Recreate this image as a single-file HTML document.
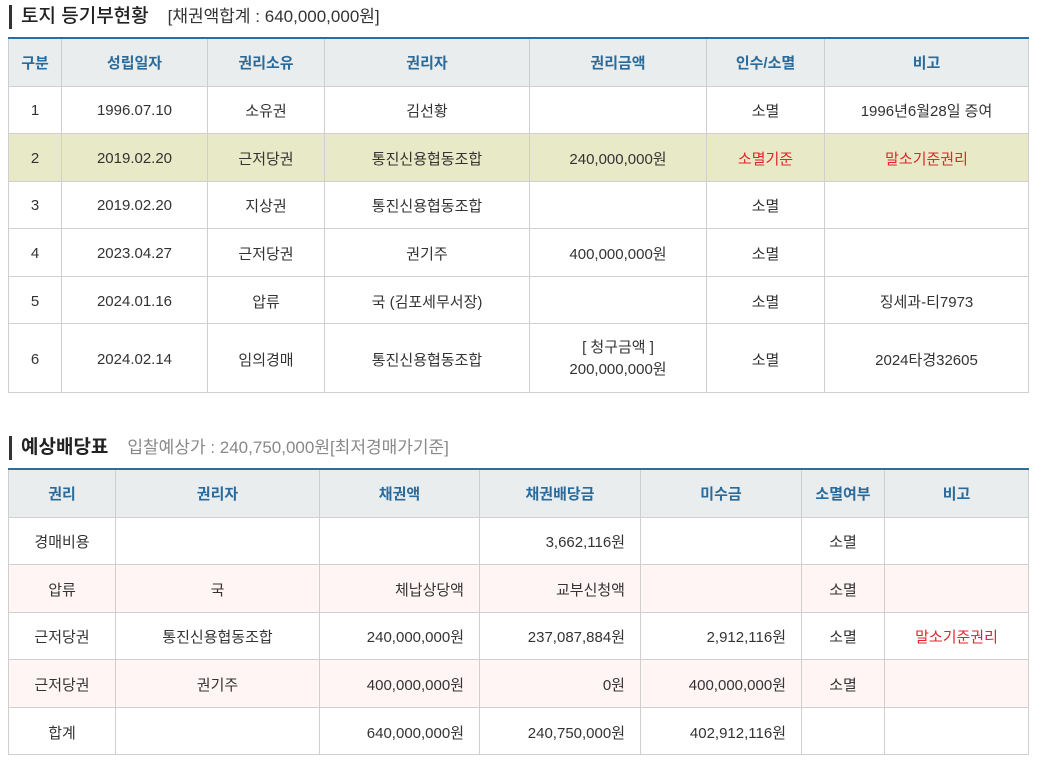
<!DOCTYPE html>
<html><head><meta charset="utf-8"><style>
*{margin:0;padding:0;box-sizing:border-box}
body{width:1039px;height:766px;background:#fff;font-family:"Liberation Sans","Noto Sans CJK KR",sans-serif;color:#333;position:relative;overflow:hidden}
.t{position:absolute;left:9px;border-left:3px solid #333;padding-left:9px;line-height:24px;height:24px;white-space:nowrap}
.t b{font-size:19px;font-weight:500;color:#222}
.t b.s{font-weight:700}
.t span{font-size:17px;margin-left:19px}
table{position:absolute;left:8px;width:1020px;border-collapse:collapse;table-layout:fixed;font-size:15px;border-top:2px solid #2c6e9c}
td,th{border:1px solid #cfcfcf;text-align:center;padding:0}
th{background:#eaeded;color:#2a6b9c;font-weight:700;height:48px}
td{height:47.6px;padding-top:2px}
.r{text-align:right;padding-right:15px}
.red{color:#e0252b}
.g td{background:#e8e9c6}
.p td{background:#fff5f5}
</style></head><body>
<div class="t" style="top:5px"><b>토지 등기부현황</b><span style="color:#333">[채권액합계 : 640,000,000원]</span></div>
<table style="top:37px">
<colgroup><col style="width:53px"><col style="width:146px"><col style="width:117px"><col style="width:205px"><col style="width:177px"><col style="width:118px"><col style="width:204px"></colgroup>
<tr><th>구분</th><th>성립일자</th><th>권리소유</th><th>권리자</th><th>권리금액</th><th>인수/소멸</th><th>비고</th></tr>
<tr><td>1</td><td>1996.07.10</td><td>소유권</td><td>김선황</td><td></td><td>소멸</td><td>1996년6월28일 증여</td></tr>
<tr class="g"><td>2</td><td>2019.02.20</td><td>근저당권</td><td>통진신용협동조합</td><td>240,000,000원</td><td class="red">소멸기준</td><td class="red">말소기준권리</td></tr>
<tr><td>3</td><td>2019.02.20</td><td>지상권</td><td>통진신용협동조합</td><td></td><td>소멸</td><td></td></tr>
<tr><td>4</td><td>2023.04.27</td><td>근저당권</td><td>권기주</td><td>400,000,000원</td><td>소멸</td><td></td></tr>
<tr><td>5</td><td>2024.01.16</td><td>압류</td><td>국 (김포세무서장)</td><td></td><td>소멸</td><td>징세과-티7973</td></tr>
<tr><td style="height:69px">6</td><td>2024.02.14</td><td>임의경매</td><td>통진신용협동조합</td><td style="line-height:22px">[ 청구금액 ]<br>200,000,000원</td><td>소멸</td><td>2024타경32605</td></tr>
</table>
<div class="t" style="top:436px"><b class="s">예상배당표</b><span style="color:#888">입찰예상가 : 240,750,000원[최저경매가기준]</span></div>
<table style="top:468px">
<colgroup><col style="width:107px"><col style="width:204px"><col style="width:160px"><col style="width:161px"><col style="width:161px"><col style="width:83px"><col style="width:144px"></colgroup>
<tr><th>권리</th><th>권리자</th><th>채권액</th><th>채권배당금</th><th>미수금</th><th>소멸여부</th><th>비고</th></tr>
<tr><td>경매비용</td><td></td><td></td><td class="r">3,662,116원</td><td></td><td>소멸</td><td></td></tr>
<tr class="p"><td>압류</td><td>국</td><td class="r">체납상당액</td><td class="r">교부신청액</td><td></td><td>소멸</td><td></td></tr>
<tr><td>근저당권</td><td>통진신용협동조합</td><td class="r">240,000,000원</td><td class="r">237,087,884원</td><td class="r">2,912,116원</td><td>소멸</td><td class="red">말소기준권리</td></tr>
<tr class="p"><td>근저당권</td><td>권기주</td><td class="r">400,000,000원</td><td class="r">0원</td><td class="r">400,000,000원</td><td>소멸</td><td></td></tr>
<tr><td>합계</td><td></td><td class="r">640,000,000원</td><td class="r">240,750,000원</td><td class="r">402,912,116원</td><td></td><td></td></tr>
</table>
</body></html>
